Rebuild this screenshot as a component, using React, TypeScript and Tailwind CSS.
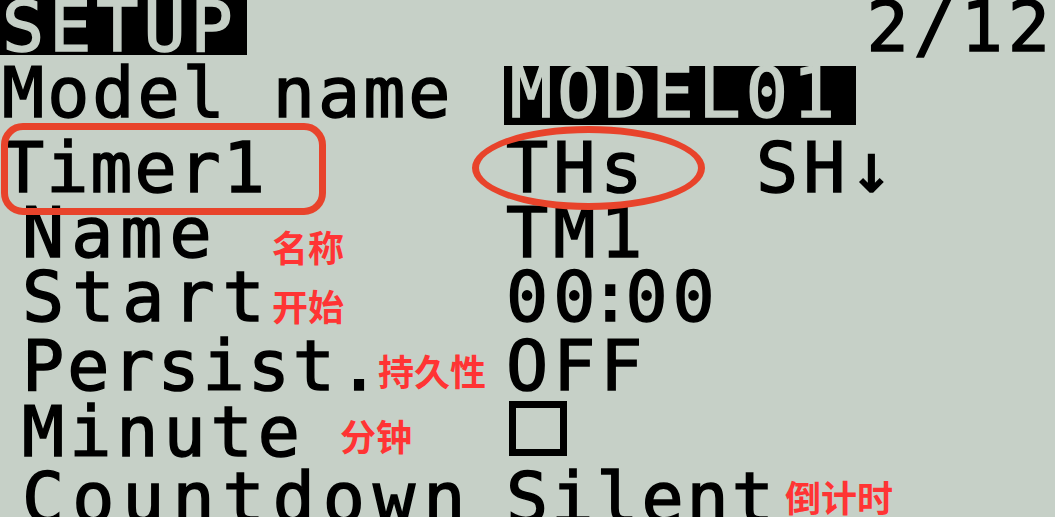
import React from "react";

const LCD_BG = "bg-[#c6d0c7]";

type RowProps = {
  label: string;
  sub?: boolean;
  className: string;
  labelClass?: string;
  children?: React.ReactNode;
};

function Row({ label, sub, className, labelClass = "", children }: RowProps) {
  return (
    <div className={`flex items-end ${className}`}>
      <div className={`w-[506px] shrink-0 leading-[60px] ${sub ? "pl-[22px]" : "pl-[2px]"} ${labelClass}`}>
        {label}
      </div>
      <div className="flex items-end leading-[60px]">{children}</div>
    </div>
  );
}

function Note({ text, className }: { text: string; className: string }) {
  return (
    <span
      className={`absolute font-['Noto_Sans_CJK_SC',sans-serif] text-[36px] font-bold leading-[36px] tracking-normal text-[#ff3434] [-webkit-text-stroke:0] ${className}`}
    >
      {text}
    </span>
  );
}

export default function App() {
  return (
    <div
      className={`relative h-[517px] w-[1055px] overflow-hidden ${LCD_BG} font-['DejaVu_Sans_Mono',monospace] text-[70px] tracking-[5px] text-black [-webkit-text-stroke:1.5px]`}
    >
      {/* title bar */}
      <div className="flex h-[55px] items-start justify-between leading-[55px]">
        <div className="h-[55px] w-[247px] bg-black pl-[2px] text-[#c6d0c7]">SETUP</div>
        <div className="pr-[0px]">2/12</div>
      </div>

      <div className="flex h-[68px] items-start pt-[11px]">
        <div className="w-[504px] shrink-0 pl-[2px] leading-[54px] tracking-[3px]">Model name</div>
        <div className="h-[59px] bg-black pl-[6px] pr-[16px] leading-[54px] text-[#c6d0c7]">MODEL01</div>
      </div>

      <Row label="Timer1" labelClass="tracking-[2px]" className="h-[75px]">
        <span className="w-[250px]">THs</span>
        <span>SH↓</span>
      </Row>
      <Row label="Name" sub labelClass="tracking-[7px]" className="h-[65px]">
        TM1
      </Row>
      <Row label="Start" sub labelClass="tracking-[8px]" className="h-[64px]">
        <span>00</span>
        <span className="-mx-[11px]">:</span>
        <span>00</span>
      </Row>
      <Row label="Persist." sub labelClass="tracking-[3px]" className="h-[69px]">
        OFF
      </Row>
      <Row label="Minute" sub className="h-[66px]">
        <div className="mb-[6px] ml-[3px] h-[55px] w-[58px] border-[7px] border-black" />
      </Row>
      <Row label="Countdown" sub labelClass="tracking-[8px]" className="h-[66px]">
        <span className="tracking-[3px]">Silent</span>
      </Row>

      {/* markup drawn over the screen */}
      <div className="pointer-events-none absolute left-[1px] top-[123px] h-[92px] w-[325px] rounded-[22px] border-[7px] border-[#e8432b]" />
      <div className="pointer-events-none absolute left-[472px] top-[126px] h-[84px] w-[233px] rounded-[50%] border-[7px] border-[#e8432b]" />

      <Note text="名称" className="left-[272px] top-[228px]" />
      <Note text="开始" className="left-[272px] top-[287px]" />
      <Note text="持久性" className="left-[378px] top-[352px]" />
      <Note text="分钟" className="left-[340px] top-[417px]" />
      <Note text="倒计时" className="left-[785px] top-[478px]" />
    </div>
  );
}
